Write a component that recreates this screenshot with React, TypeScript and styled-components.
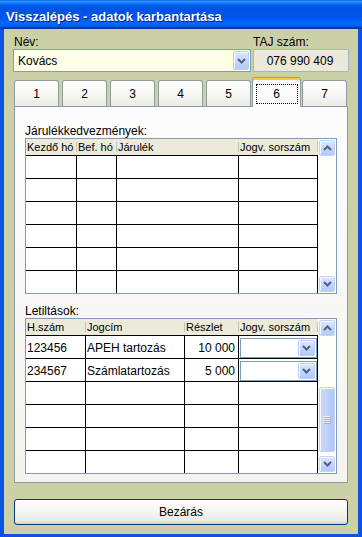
import styled, { createGlobalStyle } from "styled-components";

const GlobalStyle = createGlobalStyle`
  html, body { margin: 0; padding: 0; background: #fff; }
  body { font-family: "Liberation Sans", Arial, sans-serif; font-size: 12px; color: #000; }
  * { box-sizing: border-box; }
`;

const Window = styled.div`
  width: 362px;
  height: 537px;
  display: flex;
  flex-direction: column;
`;

const TitleBar = styled.div`
  height: 29px;
  flex: none;
  display: flex;
  align-items: center;
  padding: 3px 0 0 6px;
  background: linear-gradient(180deg, #0058ee 0%, #3593ff 4%, #288eff 7%, #127dff 10%, #036ffc 13%, #0262ee 17%, #0057e5 22%, #0054e3 28%, #0055eb 58%, #005bf5 68%, #026afe 78%, #0062ef 88%, #0052d6 93%, #0040ab 96%, #003092 100%);
  color: #fff;
  font: bold 13px "Liberation Sans", Arial, sans-serif;
  text-shadow: 1px 1px 0 #0a1883;
  white-space: nowrap;
`;

const Body = styled.div`
  flex: 1;
  display: flex;
  flex-direction: column;
  background: #ccd0a7;
  border: 4px solid #0a53e3;
  border-top: none;
  border-bottom-width: 3px;
  padding: 6px 9px 0 9px;
`;

const FieldGrid = styled.div`
  display: grid;
  grid-template-columns: 238px 96px;
  column-gap: 2px;
`;

const FieldLabel = styled.div<{ $indent?: number }>`
  height: 14px;
  line-height: 14px;
  padding-left: ${(p) => p.$indent ?? 0}px;
`;

const NameCombo = styled.div`
  height: 23px;
  border: 1px solid #7f9db9;
  background: #ffffe6;
  display: flex;
  align-items: center;
  padding-left: 4px;
`;

const ComboText = styled.span`
  flex: 1;
`;

const ComboButton = styled.div<{ $w: number; $h: number }>`
  width: ${(p) => p.$w}px;
  height: ${(p) => p.$h}px;
  margin-right: 1px;
  display: flex;
  align-items: center;
  justify-content: center;
  border: 1px solid #bacdf6;
  border-radius: 2px;
  background: linear-gradient(180deg, #dde7fe 0%, #c6d6fc 50%, #b5c9f7 100%);
  box-shadow: inset 1px 1px 0 #f4f7ff;
`;

const TajBox = styled.div`
  height: 23px;
  border: 1px solid #a3b6c9;
  background: #ece9d8;
  display: flex;
  align-items: center;
  justify-content: center;
  padding-right: 2px;
`;

const TabStrip = styled.div`
  display: flex;
  align-items: flex-end;
  gap: 3px;
  height: 29px;
  margin: 5px 1px 0;
`;

const Tab = styled.div<{ $active?: boolean }>`
  position: relative;
  width: ${(p) => (p.$active ? 49 : 45)}px;
  height: ${(p) => (p.$active ? 30 : 26)}px;
  margin: ${(p) => (p.$active ? "0 -2px -1px" : "0")};
  z-index: ${(p) => (p.$active ? 1 : 0)};
  display: flex;
  align-items: center;
  justify-content: center;
  border: 1px solid #919b9c;
  border-bottom: none;
  border-top-color: ${(p) => (p.$active ? "#e68b2c" : "#919b9c")};
  border-radius: 3px 3px 0 0;
  background: ${(p) =>
    p.$active ? "#fcfcfe" : "linear-gradient(180deg, #ffffff 0%, #f7f7f3 50%, #ecebe6 100%)"};
  box-shadow: ${(p) => (p.$active ? "inset 0 2px 0 #ffc83c" : "none")};
`;

const FocusRing = styled.span`
  width: 40px;
  height: 18px;
  margin-top: 2px;
  display: flex;
  align-items: center;
  justify-content: center;
  outline: 1px dotted #000;
`;

const Panel = styled.div`
  height: 377px;
  margin: 0 1px;
  border: 1px solid #919b9c;
  background: linear-gradient(180deg, #fcfcfe 0%, #f4f3ee 100%);
  padding: 17px 10px 0 10px;
  display: flex;
  flex-direction: column;
`;

const SectionLabel = styled.div<{ $gap?: number }>`
  height: 14px;
  line-height: 14px;
  margin-top: ${(p) => p.$gap ?? 0}px;
`;

const Table = styled.div`
  display: flex;
  border: 1px solid #7f9db9;
  background: #fff;
`;

const Cells = styled.div`
  flex: 1;
  display: flex;
  flex-direction: column;
`;

const HeaderRow = styled.div<{ $cols: string }>`
  display: grid;
  grid-template-columns: ${(p) => p.$cols};
  height: 16px;
  background: #ebeadb;
`;

const HeaderCell = styled.div`
  position: relative;
  font-size: 11px;
  line-height: 17px;
  padding-left: 1px;
  white-space: nowrap;
  overflow: hidden;

  &::after {
    content: "";
    position: absolute;
    right: 0;
    top: 3px;
    bottom: 3px;
    width: 1px;
    background: #c7c5b2;
  }
`;

const DataRow = styled.div<{ $cols: string }>`
  display: grid;
  grid-template-columns: ${(p) => p.$cols};
  height: 23px;
  border-top: 1px solid #000;
`;

const DataCell = styled.div<{ $right?: boolean }>`
  border-right: 1px solid #000;
  line-height: 22px;
  padding: 1px ${(p) => (p.$right ? 3 : 0)}px 0 ${(p) => (p.$right ? 0 : 1)}px;
  text-align: ${(p) => (p.$right ? "right" : "left")};
  white-space: nowrap;
  overflow: hidden;
`;

const CellCombo = styled.div`
  height: 20px;
  margin-top: 1px;
  border: 1px solid #7f9db9;
  background: #fff;
  display: flex;
  align-items: center;
  justify-content: flex-end;
`;

const ScrollBar = styled.div`
  width: 18px;
  display: flex;
  flex-direction: column;
  padding: 1px;
  background: #fdfdfa;
`;

const ScrollButton = styled.div`
  width: 16px;
  height: 16px;
  flex: none;
  display: flex;
  align-items: center;
  justify-content: center;
  border: 1px solid #c3d3f8;
  border-radius: 2px;
  background: linear-gradient(180deg, #dde7fe 0%, #c6d6fc 50%, #b5c9f7 100%);
  box-shadow: inset 1px 1px 0 #f4f7ff;
`;

const Track = styled.div`
  flex: 1;
  display: flex;
  flex-direction: column;
`;

const Thumb = styled.div<{ $top: number; $height: number }>`
  margin-top: ${(p) => p.$top}px;
  height: ${(p) => p.$height}px;
  display: flex;
  align-items: center;
  justify-content: center;
  border: 1px solid #c3d3f8;
  border-radius: 2px;
  background: linear-gradient(90deg, #cad9fd 0%, #bfd1fb 50%, #b2c7f6 100%);
  box-shadow: inset 1px 1px 0 #f4f7ff;
`;

const CloseButton = styled.button`
  height: 26px;
  margin: 16px 1px 0;
  border: 1px solid #003c74;
  border-radius: 3px;
  background: linear-gradient(180deg, #ffffff 0%, #f6f6f3 40%, #ecebe6 85%, #d6d0c5 100%);
  font: 12px "Liberation Sans", Arial, sans-serif;
  color: #000;
  padding: 0;
`;

const Chevron = ({ up }: { up?: boolean }) => (
  <svg width="9" height="6" viewBox="0 0 9 6">
    <polyline
      points={up ? "1,5 4.5,1.5 8,5" : "1,1 4.5,4.5 8,1"}
      fill="none"
      stroke="#4d6185"
      strokeWidth="2"
    />
  </svg>
);

const Grip = () => (
  <svg width="8" height="8" viewBox="0 0 8 8">
    {[0, 2, 4, 6].map((y) => (
      <g key={y}>
        <rect x="0" y={y} width="7" height="1" fill="#eef4fe" />
        <rect x="1" y={y + 1} width="7" height="1" fill="#8cb0f8" />
      </g>
    ))}
  </svg>
);

type Cell = string | { combo: true } | { num: string };

const Scroll = ({ thumb }: { thumb?: { top: number; height: number } }) => (
  <ScrollBar>
    <ScrollButton>
      <Chevron up />
    </ScrollButton>
    <Track>
      {thumb && (
        <Thumb $top={thumb.top} $height={thumb.height}>
          <Grip />
        </Thumb>
      )}
    </Track>
    <ScrollButton>
      <Chevron />
    </ScrollButton>
  </ScrollBar>
);

const DataTable = ({
  cols,
  headers,
  rows,
  thumb,
}: {
  cols: string;
  headers: string[];
  rows: Cell[][];
  thumb?: { top: number; height: number };
}) => (
  <Table>
    <Cells>
      <HeaderRow $cols={cols}>
        {headers.map((h) => (
          <HeaderCell key={h}>{h}</HeaderCell>
        ))}
      </HeaderRow>
      {rows.map((row, i) => (
        <DataRow key={i} $cols={cols}>
          {row.map((c, j) => {
            if (typeof c === "string") return <DataCell key={j}>{c}</DataCell>;
            if ("num" in c)
              return (
                <DataCell key={j} $right>
                  {c.num}
                </DataCell>
              );
            return (
              <DataCell key={j}>
                <CellCombo>
                  <ComboButton $w={17} $h={16}>
                    <Chevron />
                  </ComboButton>
                </CellCombo>
              </DataCell>
            );
          })}
        </DataRow>
      ))}
    </Cells>
    <Scroll thumb={thumb} />
  </Table>
);

const emptyRow = (n: number): Cell[] => Array.from({ length: n }, () => "");

const contributions: Cell[][] = Array.from({ length: 6 }, () => emptyRow(4));

const garnishments: Cell[][] = [
  ["123456", "APEH tartozás", { num: "10 000" }, { combo: true }],
  ["234567", "Számlatartozás", { num: "5 000" }, { combo: true }],
  ...Array.from({ length: 4 }, () => emptyRow(4)),
];

const tabs = ["1", "2", "3", "4", "5", "6", "7"];

export default function App() {
  return (
    <>
      <GlobalStyle />
      <Window>
        <TitleBar>Visszalépés - adatok karbantartása</TitleBar>
        <Body>
          <FieldGrid>
            <FieldLabel $indent={1}>Név:</FieldLabel>
            <FieldLabel>TAJ szám:</FieldLabel>
            <NameCombo>
              <ComboText>Kovács</ComboText>
              <ComboButton $w={16} $h={19}>
                <Chevron />
              </ComboButton>
            </NameCombo>
            <TajBox>076 990 409</TajBox>
          </FieldGrid>

          <TabStrip>
            {tabs.map((t) =>
              t === "6" ? (
                <Tab key={t} $active>
                  <FocusRing>{t}</FocusRing>
                </Tab>
              ) : (
                <Tab key={t}>{t}</Tab>
              )
            )}
          </TabStrip>

          <Panel>
            <SectionLabel>Járulékkedvezmények:</SectionLabel>
            <DataTable
              cols="51px 40px 122px 79px"
              headers={["Kezdő hó", "Bef. hó", "Járulék", "Jogv. sorszám"]}
              rows={contributions}
            />
            <SectionLabel $gap={10}>Letiltások:</SectionLabel>
            <DataTable
              cols="60px 99px 54px 79px"
              headers={["H.szám", "Jogcím", "Részlet", "Jogv. sorszám"]}
              rows={garnishments}
              thumb={{ top: 51, height: 65 }}
            />
          </Panel>

          <CloseButton>Bezárás</CloseButton>
        </Body>
      </Window>
    </>
  );
}
